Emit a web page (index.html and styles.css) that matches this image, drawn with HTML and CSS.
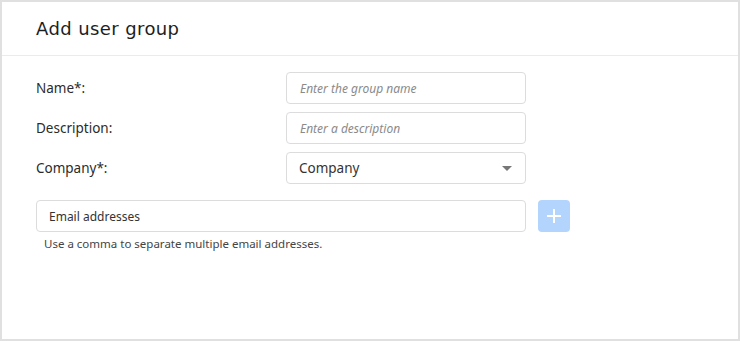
FILE: index.html
```html
<!DOCTYPE html>
<html lang="en">
<head>
  <meta charset="UTF-8" />
  <title>Add user group</title>
  <link rel="stylesheet" href="styles.css">
</head>
<body>
  <div class="panel">
    <header class="panel-head">
      <h1>Add user group</h1>
    </header>

    <div class="panel-body">
      <div class="field-row">
        <label class="field-label">Name*:</label>
        <input class="text-input" type="text" placeholder="Enter the group name">
      </div>
      <div class="field-row">
        <label class="field-label">Description:</label>
        <input class="text-input" type="text" placeholder="Enter a description">
      </div>
      <div class="field-row">
        <label class="field-label">Company*:</label>
        <div class="select-box">
          <span>Company</span>
          <span class="caret"></span>
        </div>
      </div>

      <div class="email-row">
        <input class="email-input" type="text" placeholder="Email addresses">
        <button class="add-btn" disabled>
          <svg width="16" height="16" viewBox="0 0 16 16">
            <path d="M8 1v14M1 8h14" stroke="#fff" stroke-width="2" fill="none"/>
          </svg>
        </button>
      </div>
      <p class="hint">Use a comma to separate multiple email addresses.</p>
    </div>
  </div>
</body>
</html>
```

FILE: styles.css
```css
html, body {
  height: 100%;
  margin: 0;
  padding: 0;
  background: #fff;
  font-family: 'Noto Sans', 'Liberation Sans', sans-serif;
  color: #2b2b2b;
}

.panel {
  box-sizing: border-box;
  height: 100%;
  border: 2px solid #e0e0e0;
}

.panel-head {
  height: 53px;
  border-bottom: 1px solid #ebebeb;
  display: flex;
  align-items: center;
  padding: 0 34px;
}

.panel-head h1 {
  margin: 0;
  font-family: 'DejaVu Sans', sans-serif;
  font-weight: normal;
  font-size: 18px;
  color: #1e1e1e;
  letter-spacing: 0.4px;
}

.panel-body {
  padding: 16px 34px;
  display: flex;
  flex-direction: column;
}

.field-row {
  display: flex;
  align-items: center;
  margin-bottom: 8px;
}

.field-label {
  width: 250px;
  font-size: 13.5px;
  color: #2b2b2b;
}

.text-input,
.select-box,
.email-input {
  box-sizing: border-box;
  height: 32px;
  border: 1px solid #dcdcdc;
  border-radius: 4px;
  background: #fff;
  outline: none;
  font-family: 'Noto Sans', sans-serif;
}

.text-input {
  width: 240px;
  padding: 0 13px;
  font-size: 12px;
}

.text-input::placeholder {
  font-style: italic;
  color: #8a8a8a;
}

.select-box {
  width: 240px;
  padding: 0 13px 0 12px;
  display: flex;
  align-items: center;
  justify-content: space-between;
  font-size: 13.5px;
  color: #333;
}

.caret {
  width: 0;
  height: 0;
  border-left: 5px solid transparent;
  border-right: 5px solid transparent;
  border-top: 5px solid #777;
}

.email-row {
  display: flex;
  align-items: center;
  gap: 12px;
  margin-top: 8px;
}

.email-input {
  width: 490px;
  padding: 0 12px;
  font-size: 12px;
}

.email-input::placeholder {
  color: #333;
}

.add-btn {
  width: 32px;
  height: 32px;
  border: none;
  border-radius: 4px;
  background: #b3d4fc;
  display: grid;
  place-items: center;
  padding: 0;
}

.hint {
  margin: 4px 0 0 8px;
  font-size: 11.5px;
  color: #444;
}
```
